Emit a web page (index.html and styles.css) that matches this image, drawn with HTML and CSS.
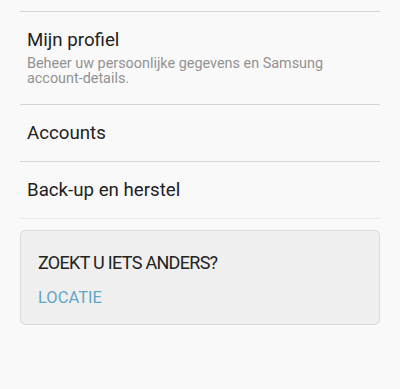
FILE: index.html
```html
<!DOCTYPE html>
<html lang="nl">
<head>
  <meta charset="UTF-8">
  <meta name="viewport" content="width=device-width, initial-scale=1.0">
  <title>Instellingen</title>
  <link rel="stylesheet" href="styles.css">
</head>
<body>
    <div class="lijst">
        <div class="item">
            <div class="titel">Mijn profiel</div>
            <div class="uitleg">Beheer uw persoonlijke gegevens en Samsung account-details.</div>
        </div>
        <div class="item">
            <div class="titel">Accounts</div>
        </div>
        <div class="item laatste">
            <div class="titel">Back-up en herstel</div>
        </div>
    </div>
    <div class="kaart">
        <div class="kaart-titel">ZOEKT U IETS ANDERS?</div>
        <a href="#" class="kaart-link">LOCATIE</a>
    </div>
</body>
</html>
```

FILE: styles.css
```css
/* Algemeen */
*{
    box-sizing: border-box;
}
body{
    margin: 0;
    background-color: #f9f9f9;
    font-family: 'Roboto', sans-serif;
}
.lijst{
    margin: 11px 20px 0;
    border-top: 1px solid #d6d6d6;
}
.item{
    padding: 17px 7px;
    border-bottom: 1px solid #d6d6d6;
}
.item.laatste{
    border-bottom-color: #ececec;
}
.titel{
    font-size: 18.7px;
    line-height: 22px;
    color: #222;
}
.uitleg{
    font-size: 14.4px;
    line-height: 15px;
    color: #929292;
    margin-top: 5px;
    padding-bottom: 1px;
    padding-right: 40px;
}

/* Kaart onderaan */
.kaart{
    margin: 11px 20px 0;
    background-color: #efefef;
    border: 1px solid #d9d9d9;
    border-radius: 5px;
    padding: 21px 17px 16px;
}
.kaart-titel{
    font-size: 18px;
    line-height: 22px;
    letter-spacing: -0.7px;
    color: #222;
}
.kaart-link{
    display: block;
    margin-top: 14px;
    font-size: 16.5px;
    line-height: 20px;
    color: #5fa7c6;
    text-decoration: none;
}
```
